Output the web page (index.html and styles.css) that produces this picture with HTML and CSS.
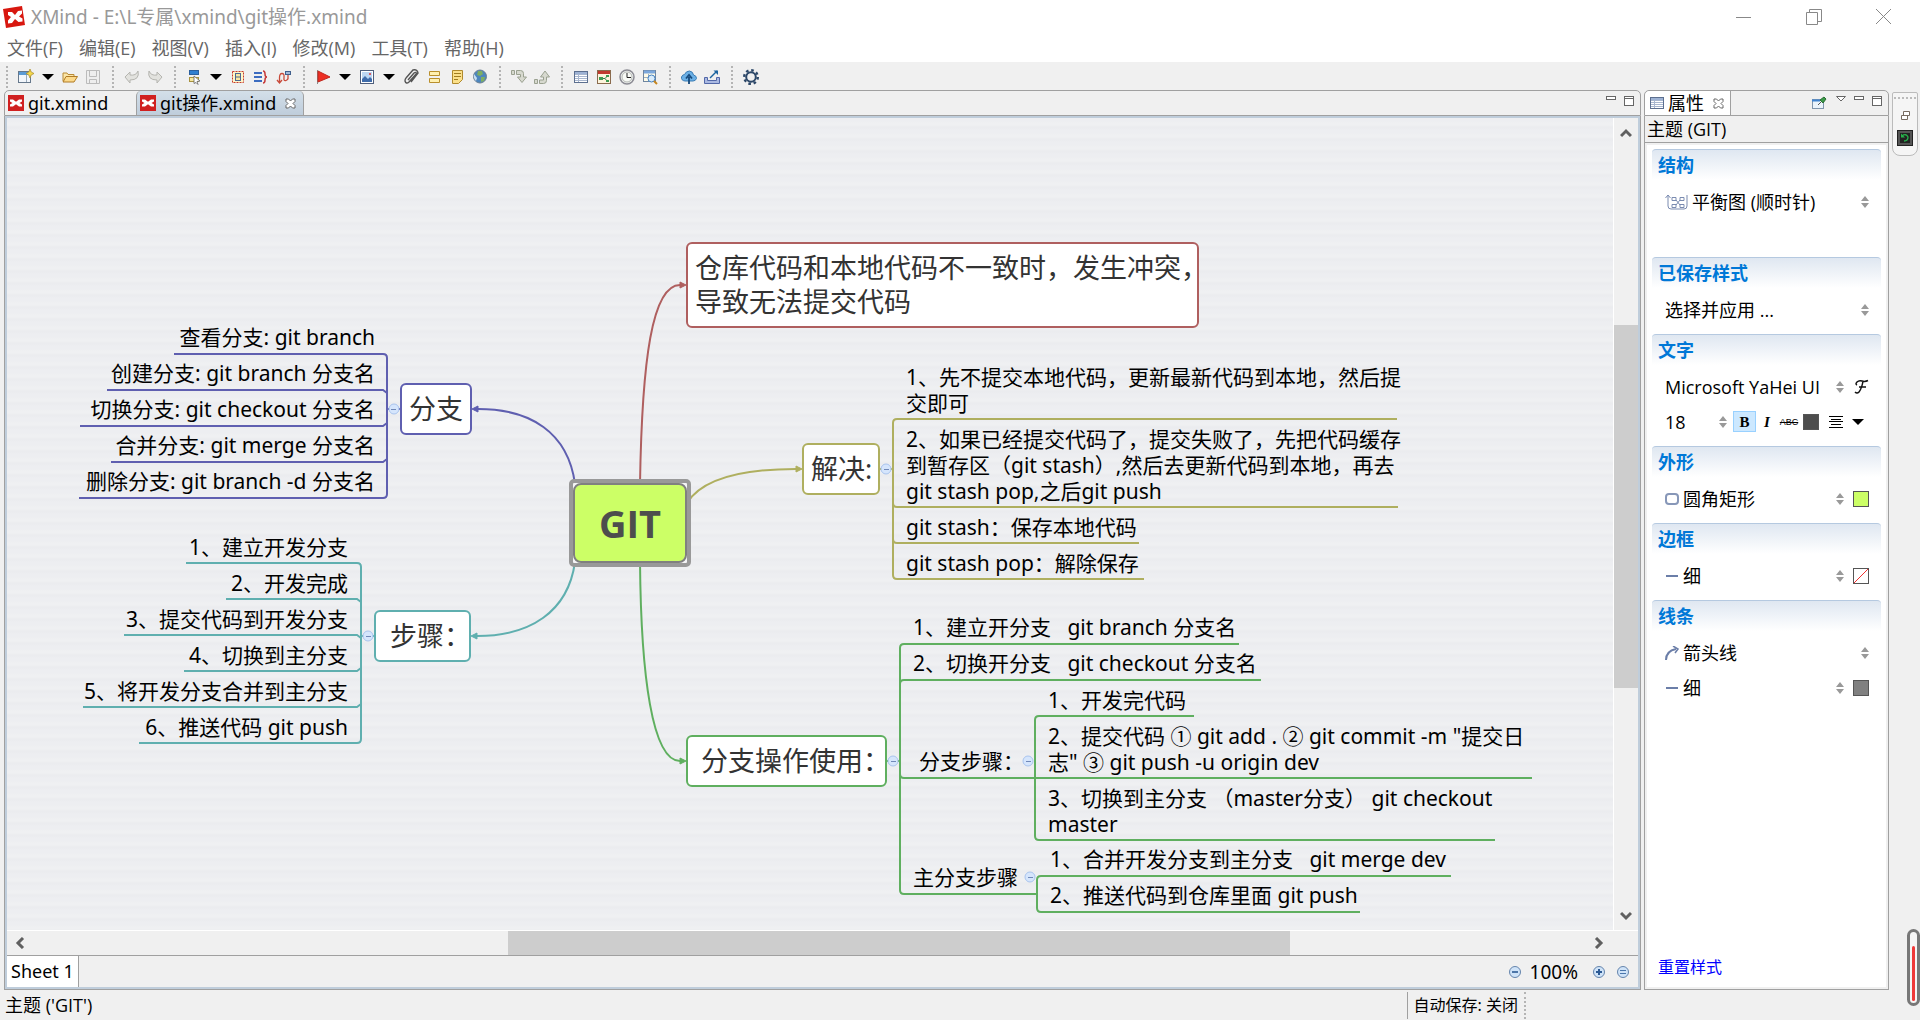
FILE: index.html
```html
<!DOCTYPE html>
<html lang="zh-CN">
<head>
<meta charset="utf-8">
<title>XMind - git操作.xmind</title>
<link rel="stylesheet" href="styles.css">
</head>
<body>
<svg class="defs" width="0" height="0" aria-hidden="true">
  <symbol id="logo" viewBox="0 0 16 16"><rect width="16" height="16" fill="#d02020"/><path d="M2 4.500h3l3 2.300 3-2.300h3v2l-2.500 1.500 2.500 1.500v2h-3l-3-2.300-3 2.300H2v-2L4.500 8 2 6.500z" fill="#fff"/></symbol>
  <symbol id="caret" viewBox="0 0 14 16"><path d="M1 5h12L7 11z" fill="#000"/></symbol>
  <symbol id="spin" viewBox="0 0 8 12"><path d="M0 5l4-5 4 5zM0 7h8l-4 5z" fill="#999"/></symbol>
  <symbol id="close" viewBox="0 0 11 11"><path d="M1 1h2.500l2 2 2-2H10v2.500l-2 2 2 2V10H7.500l-2-2-2 2H1V7.500l2-2-2-2z" fill="#fff" stroke="#666"/></symbol>
  <symbol id="min" viewBox="0 0 10 10"><rect x=".5" y=".5" width="9" height="3" fill="#fff" stroke="#666"/></symbol>
  <symbol id="max" viewBox="0 0 10 10"><rect x=".5" y=".5" width="9" height="9" fill="#fff" stroke="#666"/><path d="M0 2.500h10" stroke="#666"/></symbol>
  <symbol id="sheet" viewBox="0 0 14 12"><rect x=".5" y=".5" width="13" height="11" fill="#fff" stroke="#5c6f8f"/><path d="M1 1h12v2H1z" fill="#9db2d4"/><path d="M1 3.500h12M1 5.500h12M1 7.500h12M1 9.500h12M4.500 3v8" stroke="#a9b7cf"/></symbol>
  <symbol id="line" viewBox="0 0 14 14"><path d="M1 7h12" stroke="#6b7ea8" stroke-width="2"/></symbol>
</svg>

<header class="titlebar">
  <svg class="app-logo" width="22" height="22" viewBox="0 0 22 22"><path d="M0 3l19-3 3 19-19 3z" fill="#d8170f"/><path d="M5 6l4 0 3 3 3-4 4-.500 0 3-3 3 3.500 2v3l-4 .500-3.500-3-3 4-4 .500v-3l3-3.500L5 9z" fill="#fff"/></svg>
  <h1>XMind - E:\L专属\xmind\git操作.xmind</h1>
  <button aria-label="最小化"><svg width="16" height="16"><path d="M0 8.500h15" stroke="#888"/></svg></button>
  <button aria-label="还原"><svg width="16" height="16" fill="none" stroke="#888"><path d="M.500 3.500h11v12H.500zM3.500 3V.500h12v12H12"/></svg></button>
  <button aria-label="关闭"><svg width="16" height="16"><path d="M0 0l15 15M15 0L0 15" stroke="#888"/></svg></button>
</header>
<nav class="menubar">
  <button>文件(F)</button><button>编辑(E)</button><button>视图(V)</button><button>插入(I)</button><button>修改(M)</button><button>工具(T)</button><button>帮助(H)</button>
</nav>

<div class="toolbar" role="toolbar">
  <div class="group">
    <button aria-label="新建"><svg width="16" height="16"><rect x=".5" y="2.500" width="12" height="11" fill="#f2f6fb" stroke="#66788c"/><path d="M1 3h11v3H1z" fill="#5b9bd5"/><path d="M8.500 6v7" stroke="#9ab"/><path d="M12 0l1.200 3L16 4.500 13.200 6 12 9l-1.200-3L8 4.500 10.800 3z" fill="#f5d84a" stroke="#a8882a" stroke-width=".7"/></svg></button>
    <button class="drop" aria-label="新建选项"><svg width="14" height="16"><use href="#caret"/></svg></button>
    <button aria-label="打开"><svg width="16" height="16"><path d="M1 12V4h4l1 1.500h6V8" fill="#fbe6a8" stroke="#b98a35"/><path d="M1 13l3-5.500h11.500L12 13z" fill="#fcd98a" stroke="#b07b25"/></svg></button>
    <button aria-label="保存"><svg width="16" height="16" fill="#eee" stroke="#bbb"><path d="M1.500 1.500h13v13h-13zM4.500 1.500h7v6h-7zM4.500 10.500h7v4h-7z"/></svg></button>
  </div>
  <div class="group">
    <button aria-label="撤销"><svg width="16" height="16"><path d="M1 8l5-5v3q6 1 8-4 2 9-8 9v3z" fill="#e2e2de" stroke="#b5b5b0"/></svg></button>
    <button aria-label="重做"><svg width="16" height="16"><path d="M15 8l-5-5v3Q4 7 2 2q-2 9 8 9v3z" fill="#e2e2de" stroke="#b5b5b0"/></svg></button>
  </div>
  <div class="group">
    <button aria-label="主题"><svg width="16" height="16"><rect x="3.500" y="1.500" width="9" height="4" fill="#2f7fd0" stroke="#2a5f9e"/><rect x="3.500" y="8.500" width="9" height="4" fill="#f4e6a0" stroke="#a8923e"/><path d="M8 7l6 5-3 .500 1 3-2-2-2 1z" fill="#fff" stroke="#666" stroke-width=".8"/></svg></button>
    <button class="drop" aria-label="主题选项"><svg width="14" height="16"><use href="#caret"/></svg></button>
    <button aria-label="外框"><svg width="16" height="16"><rect x="2.500" y="2.500" width="11" height="11" fill="#fff6c8" stroke="#c63b2b" stroke-dasharray="2 1"/><rect x="5.500" y="4.500" width="5" height="7" fill="#fbe7a0" stroke="#4d6a92"/><path d="M5 8h6" stroke="#4d6a92"/></svg></button>
    <button aria-label="概要"><svg width="16" height="16" fill="none"><path d="M1 4h8M1 8h8M1 12h8" stroke="#3c6cc0" stroke-width="2"/><path d="M10 2q2 0 2 3t2 3q-2 0-2 3t-2 3" stroke="#c73a3a" stroke-width="1.500"/></svg></button>
    <button aria-label="联系"><svg width="16" height="16" fill="none"><path d="M3.500 14V8.500q0-4 2.500-4t2 4 2 3 2-3V6M1 11l2.500 3 2.500-3" stroke="#c84a3a" stroke-width="1.300"/><rect x="9.500" y="2.500" width="5" height="3" fill="#9fb8d8" stroke="#405f8c"/></svg></button>
  </div>
  <div class="group">
    <button aria-label="图标"><svg width="16" height="16"><path d="M2.500 1v14" stroke="#888"/><path d="M3 2l12 6-12 5z" fill="#ee2f24" stroke="#c0281f"/></svg></button>
    <button class="drop" aria-label="图标选项"><svg width="14" height="16"><use href="#caret"/></svg></button>
    <button aria-label="图片"><svg width="16" height="16"><rect x="1.500" y="1.500" width="13" height="13" fill="#fff" stroke="#4f5f7c"/><rect x="3" y="3" width="10" height="10" fill="#bcd6f2"/><path d="M3 13v-3l3-3 3 3 2-2 2 2v3z" fill="#3f6cab"/><circle cx="11" cy="5" r="1" fill="#d33"/></svg></button>
    <button class="drop" aria-label="图片选项"><svg width="14" height="16"><use href="#caret"/></svg></button>
    <button aria-label="附件"><svg width="16" height="16" fill="none" stroke="#555" stroke-width="1.400"><path d="M5 11l6-7q2-1.500 2.500.500L6 13q-3 2.500-4-1 0-2 1-3l7-8q4-1 5 3l-7 9"/></svg></button>
    <button aria-label="标签"><svg width="16" height="16" fill="#fff0b0" stroke="#b98f2c"><path d="M3.500 2.500h10v4h-10zM3.500 9.500h10v4h-10z"/></svg></button>
    <button aria-label="备注"><svg width="16" height="16"><path d="M3.500 1.500h10v9l-4 4h-6z" fill="#fbe08a" stroke="#b08a2c"/><path d="M5 4.500h7M5 7.500h7M5 10.500h4" stroke="#a07c20"/></svg></button>
    <button aria-label="超链接"><svg width="16" height="16"><circle cx="8" cy="7.500" r="6.500" fill="#4d86bd" stroke="#6b7f92"/><path d="M6 2l4 0 1 3-3 2-3-1zM9 8l4 0-1 4-3 1z" fill="#7fae62"/><path d="M2 5l3 4-1 3q-3-3-2-7z" fill="#c8dff2"/></svg></button>
  </div>
  <div class="group">
    <button aria-label="下钻"><svg width="16" height="16" fill="#d7d9cf" stroke="#9aa190"><path d="M.500 1.500h3v4h-3zM5.500 1.500h4q3 0 3 3V8h3l-4.500 5.500L6.500 8h3V5.500h-4z"/></svg></button>
    <button aria-label="上钻"><svg width="16" height="16" fill="#d7d9cf" stroke="#9aa190"><path d="M.500 10.500h3v4h-3zM5.500 14.500h4q3 0 3-3V8h3L11 2 6.500 8h3v3h-4z"/></svg></button>
  </div>
  <div class="group">
    <button aria-label="属性"><svg width="14" height="12"><use href="#sheet"/></svg></button>
    <button aria-label="风格"><svg width="16" height="16"><rect x="1.500" y="1.500" width="13" height="13" fill="#fdf4dc" stroke="#8a6b4e"/><path d="M2 2h12v3H2z" fill="#c03a2e"/><path d="M6 9.500h3l2-2M9 9.500l2 2.500" fill="none" stroke="#377d4e"/><rect x="3" y="8" width="4" height="3" fill="#3d9a50"/><path d="M10 7h3M10 12h3" stroke="#3d9a50" stroke-width="2"/></svg></button>
    <button aria-label="历史"><svg width="16" height="16"><circle cx="8" cy="8" r="7" fill="#eef0ee" stroke="#8c8c94" stroke-width="1.500"/><circle cx="8" cy="8" r="5" fill="#f8faf6" stroke="#b5b9b5"/><path d="M8 4v4.500h4" fill="none" stroke="#222"/></svg></button>
    <button aria-label="预览"><svg width="16" height="16"><rect x="1.500" y="1.500" width="12" height="11" fill="#fffbe8" stroke="#6f86a0"/><path d="M2 3h11" stroke="#7ba7dc" stroke-width="3"/><path d="M6.500 5v7M2 8.500h5" stroke="#9db0c0"/><circle cx="9.500" cy="9.500" r="3.500" fill="#d8ebfb" stroke="#4383c4"/><path d="M12 12l3 3" stroke="#c7861f" stroke-width="2"/></svg></button>
  </div>
  <div class="group">
    <button aria-label="云"><svg width="16" height="16"><path d="M4 12q-4-.500-3.500-4 1-2.500 3-2.500Q5 2 8.500 2 12 2.500 12.500 6q3 .500 3 3.500-1 2.500-3.500 2.500z" fill="#6bb0e6" stroke="#3b7cb4"/><path d="M8 15V8M5 9.500L8 6l3 3.500" fill="none" stroke="#174a7c" stroke-width="1.800"/></svg></button>
    <button aria-label="分享"><svg width="16" height="16"><path d="M.500 8.500h3v3h9v-3h3v6H.500z" fill="#aab9e2" stroke="#5268a8"/><path d="M6 9l7-7" stroke="#1c64a0" stroke-width="1.500"/><path d="M9.500 1.500H14V6z" fill="#1c64a0"/></svg></button>
  </div>
  <div class="group">
    <button aria-label="设置"><svg width="16" height="16" fill="none" stroke="#2c4768"><circle cx="8" cy="8" r="4.800" stroke-width="2"/><circle cx="8" cy="8" r="6.800" stroke-width="2.400" stroke-dasharray="2.600 2.740"/></svg></button>
  </div>
</div>

<main class="workbench">
  <section class="editor">
    <div class="tabs">
      <button class="tab"><svg width="16" height="16"><use href="#logo"/></svg>git.xmind</button>
      <button class="tab active"><svg width="16" height="16"><use href="#logo"/></svg>git操作.xmind<svg class="x" width="11" height="11"><use href="#close"/></svg></button>
      <span class="fill"></span>
      <button class="icon" aria-label="最小化"><svg width="10" height="10"><use href="#min"/></svg></button>
      <button class="icon" aria-label="最大化"><svg width="10" height="10"><use href="#max"/></svg></button>
    </div>
    <div class="frame">
      <div class="viewport">
        <div class="canvas">
          <svg class="links" width="1606" height="812" viewBox="7 118 1606 812" fill="none" stroke-width="2">
            <g stroke="#5f5fb0">
              <path d="M575 484C568 432 530 409 478 409M174 354H383Q387 354 387 358V494Q387 498 383 498H79M107 390H383L387 393M80 426H383L387 423M111 462H383L387 459M387 409H401"/>
              <path d="M472 409l6-3v6z" fill="#5f5fb0" stroke-width="1"/>
            </g>
            <g stroke="#5fafaf">
              <path d="M575 562C568 612 530 636 477 636M186 563H357Q361 563 361 567V739Q361 743 357 743H139M226 599H357L361 602M124 635H357L361 638M184 671H357L361 668M83 707H357L361 704M361 636H375"/>
              <path d="M471 636l6-3v6z" fill="#5fafaf" stroke-width="1"/>
            </g>
            <g stroke="#af5f5f">
              <path d="M640 484C642 360 652 285 680 285"/>
              <path d="M686 285l-6-3v6z" fill="#af5f5f" stroke-width="1"/>
            </g>
            <g stroke="#afaf5f">
              <path d="M687 503C702 479 740 469 796 469M1397 419H897Q893 419 893 423V575Q893 579 897 579H1144M893 503Q893 507 897 507H1398M893 539Q893 543 897 543H1139M880 469H893"/>
              <path d="M802 469l-6-3v6z" fill="#afaf5f" stroke-width="1"/>
            </g>
            <g stroke="#5faf5f">
              <path d="M640 562C641 675 652 761 680 761M1239 644H904Q900 644 900 648V890Q900 894 904 894H1037M900 684Q900 680 904 680H1261M900 774Q900 778 904 778H1532M1194 716H1039Q1035 716 1035 720V836Q1035 840 1039 840H1495M1451 876H1041Q1037 876 1037 880V908Q1037 912 1041 912H1360M887 761H900"/>
              <path d="M686 761l-6-3v6z" fill="#5faf5f" stroke-width="1"/>
            </g>
            <g fill="#d5e5fc" stroke="#a9c4ee" stroke-width="1">
              <circle cx="394" cy="409" r="5"/><circle cx="368" cy="636" r="5"/><circle cx="886" cy="469" r="5"/><circle cx="893" cy="761" r="5"/><circle cx="1028" cy="761" r="5"/><circle cx="1030" cy="877" r="5"/>
              <path stroke="#7088b8" d="M391 409.500h5M366 636.500h5M884 469.500h5M891 761.500h5M1026 761.500h5M1028 877.500h5"/>
            </g>
          </svg>

          <div class="root"><strong>GIT</strong></div>

          <div class="topic blue">分支</div>
          <ul class="leaves blue-leaves">
            <li>查看分支: git branch</li>
            <li>创建分支: git branch 分支名</li>
            <li>切换分支: git checkout 分支名</li>
            <li>合并分支: git merge 分支名</li>
            <li>删除分支: git branch -d 分支名</li>
          </ul>

          <div class="topic teal">步骤：</div>
          <ul class="leaves teal-leaves">
            <li>1、建立开发分支</li>
            <li>2、开发完成</li>
            <li>3、提交代码到开发分支</li>
            <li>4、切换到主分支</li>
            <li>5、将开发分支合并到主分支</li>
            <li>6、推送代码 git push</li>
          </ul>

          <div class="topic red">仓库代码和本地代码不一致时，发生冲突，<br>导致无法提交代码</div>

          <div class="topic olive">解决:</div>
          <ul class="leaves olive-leaves">
            <li>1、先不提交本地代码，更新最新代码到本地，然后提<br>交即可</li>
            <li>2、如果已经提交代码了，提交失败了，先把代码缓存<br>到暂存区（git stash）,然后去更新代码到本地，再去<br>git stash pop,之后git push</li>
            <li>git stash：保存本地代码</li>
            <li>git stash pop：解除保存</li>
          </ul>

          <div class="topic green">分支操作使用：</div>
          <ul class="leaves green-leaves">
            <li>1、建立开分支   git branch 分支名</li>
            <li>2、切换开分支   git checkout 分支名</li>
          </ul>
          <div class="leaves step-label">分支步骤：</div>
          <ul class="leaves step-leaves">
            <li>1、开发完代码</li>
            <li>2、提交代码 ① git add . ② git commit -m "提交日<br>志" ③ git push -u origin dev</li>
            <li>3、切换到主分支 （master分支） git checkout<br>master</li>
          </ul>
          <div class="leaves main-label">主分支步骤</div>
          <ul class="leaves main-leaves">
            <li>1、合并开发分支到主分支   git merge dev</li>
            <li>2、推送代码到仓库里面 git push</li>
          </ul>
        </div>
        <div class="vscroll">
          <svg width="12" height="10"><path d="M1 8l5-5 5 5" fill="none" stroke="#606060" stroke-width="3"/></svg>
          <div class="track"><div class="thumb"></div></div>
          <svg width="12" height="10"><path d="M1 2l5 5 5-5" fill="none" stroke="#606060" stroke-width="3"/></svg>
        </div>
      </div>
      <div class="hscroll">
        <svg width="10" height="12"><path d="M8 1L3 6l5 5" fill="none" stroke="#606060" stroke-width="3"/></svg>
        <div class="track"><div class="thumb"></div></div>
        <svg width="10" height="12"><path d="M2 1l5 5-5 5" fill="none" stroke="#606060" stroke-width="3"/></svg>
      </div>
      <div class="sheets">
        <button class="sheet">Sheet 1</button>
        <span class="fill"></span>
        <button class="icon" aria-label="缩小"><svg width="12" height="12"><circle cx="6" cy="6" r="5.500" fill="#cfe3f8" stroke="#6484ac"/><path d="M3 6h6" stroke="#2c5a94" stroke-width="1.600"/></svg></button>
        <span class="percent">100%</span>
        <button class="icon plus" aria-label="放大"><svg width="12" height="12"><circle cx="6" cy="6" r="5.500" fill="#cfe3f8" stroke="#6484ac"/><path d="M3 6h6M6 3v6" stroke="#2c5a94" stroke-width="2"/></svg></button>
        <button class="icon" aria-label="实际大小"><svg width="12" height="12"><circle cx="6" cy="6" r="5.500" fill="#cfe3f8" stroke="#6484ac"/><path d="M3 4.500h6M3 7.500h6" stroke="#4a76ac"/></svg></button>
      </div>
    </div>
  </section>

  <aside class="props">
    <div class="tabs">
      <button class="tab active"><svg width="14" height="12"><use href="#sheet"/></svg>属性<svg class="x" width="11" height="11"><use href="#close"/></svg></button>
      <span class="fill"></span>
      <button class="icon pin" aria-label="固定"><svg width="16" height="14"><rect x="1.500" y="3.500" width="11" height="9" fill="#eaf3fb" stroke="#7f95ad"/><path d="M1 4.500h8" stroke="#3f83cf" stroke-width="2"/><path d="M7 9l3-3" stroke="#555"/><path d="M9 4l4-3 2 2-3 4z" fill="#3c9a48" stroke="#2a6e34"/></svg></button>
      <button class="icon" aria-label="菜单"><svg width="10" height="10"><path d="M.500.500h9L5 5z" fill="#fff" stroke="#666"/></svg></button>
      <button class="icon" aria-label="最小化"><svg width="10" height="10"><use href="#min"/></svg></button>
      <button class="icon" aria-label="最大化"><svg width="10" height="10"><use href="#max"/></svg></button>
    </div>
    <h2>主题 (GIT)</h2>
    <div class="panel">
      <fieldset class="structure">
        <legend>结构</legend>
        <label class="row"><svg width="23" height="16" fill="none" stroke="#7a8bb0"><path d="M.500 4L3 1l2.500 3M3 1v11q0 3 3 3h13q3 0 3-3V1M7 3.500h4v3H7zM15 3.500h4v3h-4zM7 10.500h4v3H7zM15 10.500h4v3h-4zM11 6l4 5M15 6l-4 5"/></svg><select aria-label="结构"><option>平衡图 (顺时针)</option></select><svg width="8" height="12"><use href="#spin"/></svg></label>
      </fieldset>
      <fieldset>
        <legend>已保存样式</legend>
        <label class="row"><select aria-label="样式"><option>选择并应用 ...</option></select><svg width="8" height="12"><use href="#spin"/></svg></label>
      </fieldset>
      <fieldset>
        <legend>文字</legend>
        <div class="row"><select aria-label="字体"><option>Microsoft YaHei UI</option></select><svg width="8" height="12"><use href="#spin"/></svg><button class="glyph" aria-label="字体对话框"><svg width="16" height="16" fill="none" stroke="#111" stroke-width="1.500"><path d="M4 3q2-2 5-1t6-.500M10 2Q9 9 6 13q-2 2-4 0M6 8h7M4 3q-2 2 0 3"/></svg></button></div>
        <div class="row text-tools"><select class="size" aria-label="字号"><option>18</option></select><svg width="8" height="12"><use href="#spin"/></svg><button class="bold" aria-label="粗体">B</button><button class="italic" aria-label="斜体">I</button><button class="strike" aria-label="删除线">ABC</button><button class="swatch dark" aria-label="文字颜色"></button><button aria-label="对齐"><svg width="14" height="12" stroke="#000"><path d="M0 .500h14M2 3.500h10M0 5.500h14M2 8.500h10M0 11.500h14"/></svg></button><button aria-label="对齐选项"><svg width="12" height="16" viewBox="1 0 12 16"><use href="#caret" width="14" height="16"/></svg></button></div>
      </fieldset>
      <fieldset>
        <legend>外形</legend>
        <div class="row"><svg width="14" height="14"><rect x="1" y="2" width="12" height="10" rx="3" fill="none" stroke="#8797b8" stroke-width="2"/></svg><select aria-label="外形"><option>圆角矩形</option></select><svg width="8" height="12"><use href="#spin"/></svg><button class="swatch lime" aria-label="填充颜色"></button></div>
      </fieldset>
      <fieldset>
        <legend>边框</legend>
        <div class="row"><svg width="14" height="14"><use href="#line"/></svg><select aria-label="边框"><option>细</option></select><svg width="8" height="12"><use href="#spin"/></svg><button class="swatch" aria-label="边框颜色"><svg width="14" height="14"><path d="M0 14L14 0" stroke="#f03030"/></svg></button></div>
      </fieldset>
      <fieldset>
        <legend>线条</legend>
        <label class="row"><svg width="14" height="14" fill="none" stroke="#6b7ea8" stroke-width="2"><path d="M1 14Q1 5 11 3"/><path d="M8 0l5 3-3 4" stroke-width="1.500"/></svg><select aria-label="线条类型"><option>箭头线</option></select><svg width="8" height="12"><use href="#spin"/></svg></label>
        <div class="row"><svg width="14" height="14"><use href="#line"/></svg><select aria-label="线条粗细"><option>细</option></select><svg width="8" height="12"><use href="#spin"/></svg><button class="swatch gray" aria-label="线条颜色"></button></div>
      </fieldset>
      <a class="reset" href="#reset">重置样式</a>
    </div>
  </aside>

  <div class="trim">
    <div class="trim-box">
      <span class="dots"></span>
      <button aria-label="还原"><svg width="9" height="9" fill="#fff" stroke="#776b60"><path d="M2.500.500h6v4h-6zM.500 4.500h6v4h-6z"/></svg></button>
      <button aria-label="历史"><svg width="16" height="16"><rect x=".5" y=".5" width="15" height="15" fill="#555" stroke="#222"/><rect x="3" y="3" width="10" height="10" fill="#222"/><path d="M5 6q4-3 6 1 0 4-4 4" fill="none" stroke="#27b34c" stroke-width="1.300"/><path d="M4 3.500v4h4z" fill="#27b34c"/></svg></button>
    </div>
  </div>
</main>

<footer class="status">
  <span class="fill">主题 ('GIT')</span>
  <span class="autosave">自动保存: 关闭</span>
</footer>
<div class="gauge"><div class="level"></div></div>
</body>
</html>
```

FILE: styles.css
```css
* { box-sizing: border-box; }

body {
  margin: 0;
  min-height: 100vh;
  display: flex;
  flex-direction: column;
  background: #f0f0f0;
  color: #000;
  font: 18px/24px "Noto Sans", "Noto Sans CJK SC", sans-serif;
  overflow: hidden;
}

button, select {
  font: inherit;
  color: inherit;
  border: 0;
  padding: 0;
  margin: 0;
  background: none;
}
button { display: flex; align-items: center; justify-content: center; }
svg { display: block; flex: none; }
.defs { position: absolute; }
.fill { flex: 1; }

/* title bar and menus */
.titlebar {
  display: flex;
  align-items: center;
  height: 34px;
  padding: 0 1px 0 3px;
  background: #fff;
  color: #999;
}
.titlebar h1 {
  flex: 1;
  margin: 0 0 0 6px;
  font-size: 19px;
  font-weight: 400;
}
.titlebar button { width: 70px; height: 32px; }
.menubar {
  display: flex;
  gap: 16px;
  height: 28px;
  padding: 0 7px;
  background: #fff;
  color: #666;
  font-family: "Open Sans", "Noto Sans CJK SC", sans-serif;
}

/* toolbar */
.toolbar { display: flex; align-items: center; height: 28px; padding: 2px 0 0 6px; }
.group {
  display: flex;
  align-items: center;
  gap: 7px;
  height: 22px;
  padding: 0 11px 0 10px;
  border-left: 2px dotted #b4b4b4;
}
.group button { width: 16px; height: 16px; }
.group .drop { width: 14px; }

/* workbench */
.workbench { flex: 1; display: flex; gap: 3px; padding-left: 4px; }
.editor { flex: 1; min-width: 0; display: flex; flex-direction: column; }
.tabs {
  display: flex;
  height: 26px;
  border: 1px solid #a0a0a0;
  border-radius: 5px 5px 0 0;
}
.tab { gap: 4px; padding: 0 7px 0 3px; }
.tab .x { margin-left: 5px; }
.editor .tab:first-child { width: 131px; justify-content: flex-start; }
.editor .tab.active {
  border: solid #a0a0a0;
  border-width: 0 1px;
  background: linear-gradient(#d3dfe9, #bfcddb);
  border-radius: 5px 5px 0 0;
}
.tabs .icon { align-items: flex-start; padding-top: 5px; margin-right: 8px; }
.tabs .icon:last-child { margin-right: 6px; }
.frame {
  flex: 1;
  display: flex;
  flex-direction: column;
  border: solid #a0a0a0;
  border-width: 0 1px 1px;
  box-shadow: inset 0 0 0 2px #bfcddb;
  padding: 2px;
}
.viewport { flex: 1; display: flex; }
.canvas {
  position: relative;
  flex: 1;
  min-width: 0;
  overflow: hidden;
  background: repeating-linear-gradient(#edeef1 0 3px, #eff0f2 5px 7px, #ebecef 9px 10px, #edeef1 12px);
}
.vscroll {
  display: flex;
  flex-direction: column;
  align-items: center;
  width: 25px;
  padding: 10px 0 9px;
  border-left: 1px solid #fff;
}
.track { flex: 1; }
.vscroll .track { width: 100%; padding-top: 187px; }
.vscroll .thumb { height: 62%; background: #cdcdcd; }
.hscroll {
  display: flex;
  align-items: center;
  height: 25px;
  padding: 0 34px 0 8px;
  border-top: 1px solid #fff;
}
.hscroll .track { height: 100%; padding-left: 483px; }
.hscroll .thumb { width: 72%; height: 100%; background: #cdcdcd; }
.sheets {
  display: flex;
  align-items: center;
  height: 32px;
  border-top: 1px solid #a0a0a0;
  padding-right: 9px;
}
.sheet {
  align-self: stretch;
  padding: 0 4px 2px;
  background: #fff;
  border-right: 1px solid #a0a0a0;
}
.percent { margin: 0 15px 0 9px; font-size: 19px; }
.plus { margin-right: 12px; }

/* mind map */
.links { position: absolute; left: 0; top: 0; }
.root {
  position: absolute;
  left: 562px;
  top: 361px;
  width: 122px;
  height: 88px;
  border: 4px solid #999;
  border-radius: 5px;
  background: #f4f4f6;
}
.root strong {
  display: flex;
  align-items: center;
  justify-content: center;
  height: 100%;
  border: 2px solid #808080;
  border-radius: 8px;
  background: #cf6;
  color: #4d4d4d;
  font: 700 38px/48px "Open Sans", sans-serif;
}
.topic {
  position: absolute;
  height: 52px;
  border: 2px solid;
  border-radius: 6px;
  background: #fff;
  padding: 7px;
  font-size: 27px;
  line-height: 34px;
  white-space: nowrap;
  -webkit-text-fill-color: #333;
}
.blue { left: 393px; top: 265px; width: 72px; color: #5f5fb0; }
.teal { left: 367px; top: 492px; width: 97px; color: #5fafaf; padding-left: 14px; }
.red { left: 679px; top: 124px; width: 513px; height: 86px; color: #af5f5f; }
.olive { left: 795px; top: 325px; width: 78px; color: #afaf5f; }
.green { left: 679px; top: 617px; width: 201px; color: #5faf5f; padding-left: 13px; }

.leaves {
  position: absolute;
  margin: 0;
  padding: 0;
  list-style: none;
  font-size: 21px;
  line-height: 26px;
  white-space: nowrap;
}
.leaves li, div.leaves { padding: 5px 0; white-space: pre; }
.blue-leaves, .teal-leaves { left: 53px; text-align: right; }
.blue-leaves { top: 201px; width: 315px; }
.teal-leaves { top: 411px; width: 288px; }
.olive-leaves { left: 899px; top: 241px; }
.green-leaves { left: 906px; top: 491px; }
.step-label { left: 912px; top: 625px; }
.step-leaves { left: 1041px; top: 564px; }
.main-label { left: 906px; top: 741px; }
.main-leaves { left: 1043px; top: 723px; }

/* properties view */
.props { width: 245px; display: flex; flex-direction: column; }
.props .tab.active { background: #fff; padding: 0 6px 0 5px; border-right: 1px solid #a0a0a0; border-radius: 5px 0 0; }
.props .tabs .pin { margin-right: 9px; }
.props h2 {
  margin: 0;
  height: 26px;
  padding: 0 2px;
  border: solid #a0a0a0;
  border-width: 0 1px;
  font: 400 18px/26px "Open Sans", "Noto Sans CJK SC", sans-serif;
}
.panel {
  flex: 1;
  display: flex;
  flex-direction: column;
  padding: 6px 7px 10px;
  border: 1px solid #a0a0a0;
  background: #fff;
  box-shadow: inset 0 0 0 2px #f0f0f0;
}
fieldset { margin: 0; padding: 0 0 7px; border: 0; min-width: 0; }
.structure { padding-bottom: 38px; }
legend {
  display: block;
  width: 100%;
  height: 35px;
  padding: 3px 6px;
  border-top: 1px solid #b5c9e0;
  border-radius: 4px 4px 0 0;
  background: linear-gradient(#dfe7f1, #fff 30px);
  color: #0078d7;
  font-weight: 700;
}
.row { display: flex; align-items: center; height: 35px; padding: 0 12px 0 13px; gap: 9px; font-family: "Open Sans", "Noto Sans CJK SC", sans-serif; }
.row > svg:first-child { margin-right: -5px; }
.row select { flex: 1; min-width: 0; appearance: none; outline: 0; }
.text-tools { gap: 0; }
.row .size { flex: none; width: 54px; }
.text-tools button { flex: 1; height: 21px; }
.text-tools .bold {
  flex: none;
  width: 23px;
  margin: 0 0 0 6px;
  border: 1px solid #99d1ff;
  background: #cce8ff;
  font: 900 15px/18px "Liberation Serif", serif;
}
.text-tools .italic { font: italic 700 15px/18px "Liberation Serif", serif; }
.text-tools .strike { font: 9px/12px "Liberation Sans", sans-serif; text-decoration: line-through; }
.swatch, .text-tools .swatch { flex: none; width: 16px; height: 16px; border: 1px solid #555; }
.text-tools .swatch.dark { background: #4d4d4d; margin: 0 6px 0 3px; }
.lime { background: #cf6; }
.gray { background: #808080; }
.reset { margin-top: auto; padding-left: 6px; color: #00f; font-size: 16px; text-decoration: none; }

.trim { width: 28px; padding-top: 2px; }
.trim-box {
  display: flex;
  flex-direction: column;
  align-items: center;
  width: 26px;
  height: 64px;
  border: 1px solid #bbb;
  border-radius: 2px 2px 8px 8px;
  background: #f5f5f5;
}
.trim-box .dots { width: 22px; margin: 4px 0 12px; border-top: 2px dotted #bbb; }
.trim-box button:last-child { margin-top: 10px; }

/* status bar */
.status { display: flex; height: 30px; padding: 2px 394px 1px 5px; line-height: 26px; }
.status .fill { font-family: "Open Sans", "Noto Sans CJK SC", sans-serif; }
.autosave {
  padding: 0 6px;
  border-left: 1px solid #a0a0a0;
  border-right: 2px dotted #b4b4b4;
  font-size: 16px;
}
.gauge {
  position: fixed;
  right: 0;
  bottom: 14px;
  width: 13px;
  height: 77px;
  padding: 14px 2px 2px;
  border: 3px solid #777;
  border-radius: 7px;
  background: #f5f5f5;
}
.level { height: 100%; border-radius: 3px; background: #f03838; }
```
